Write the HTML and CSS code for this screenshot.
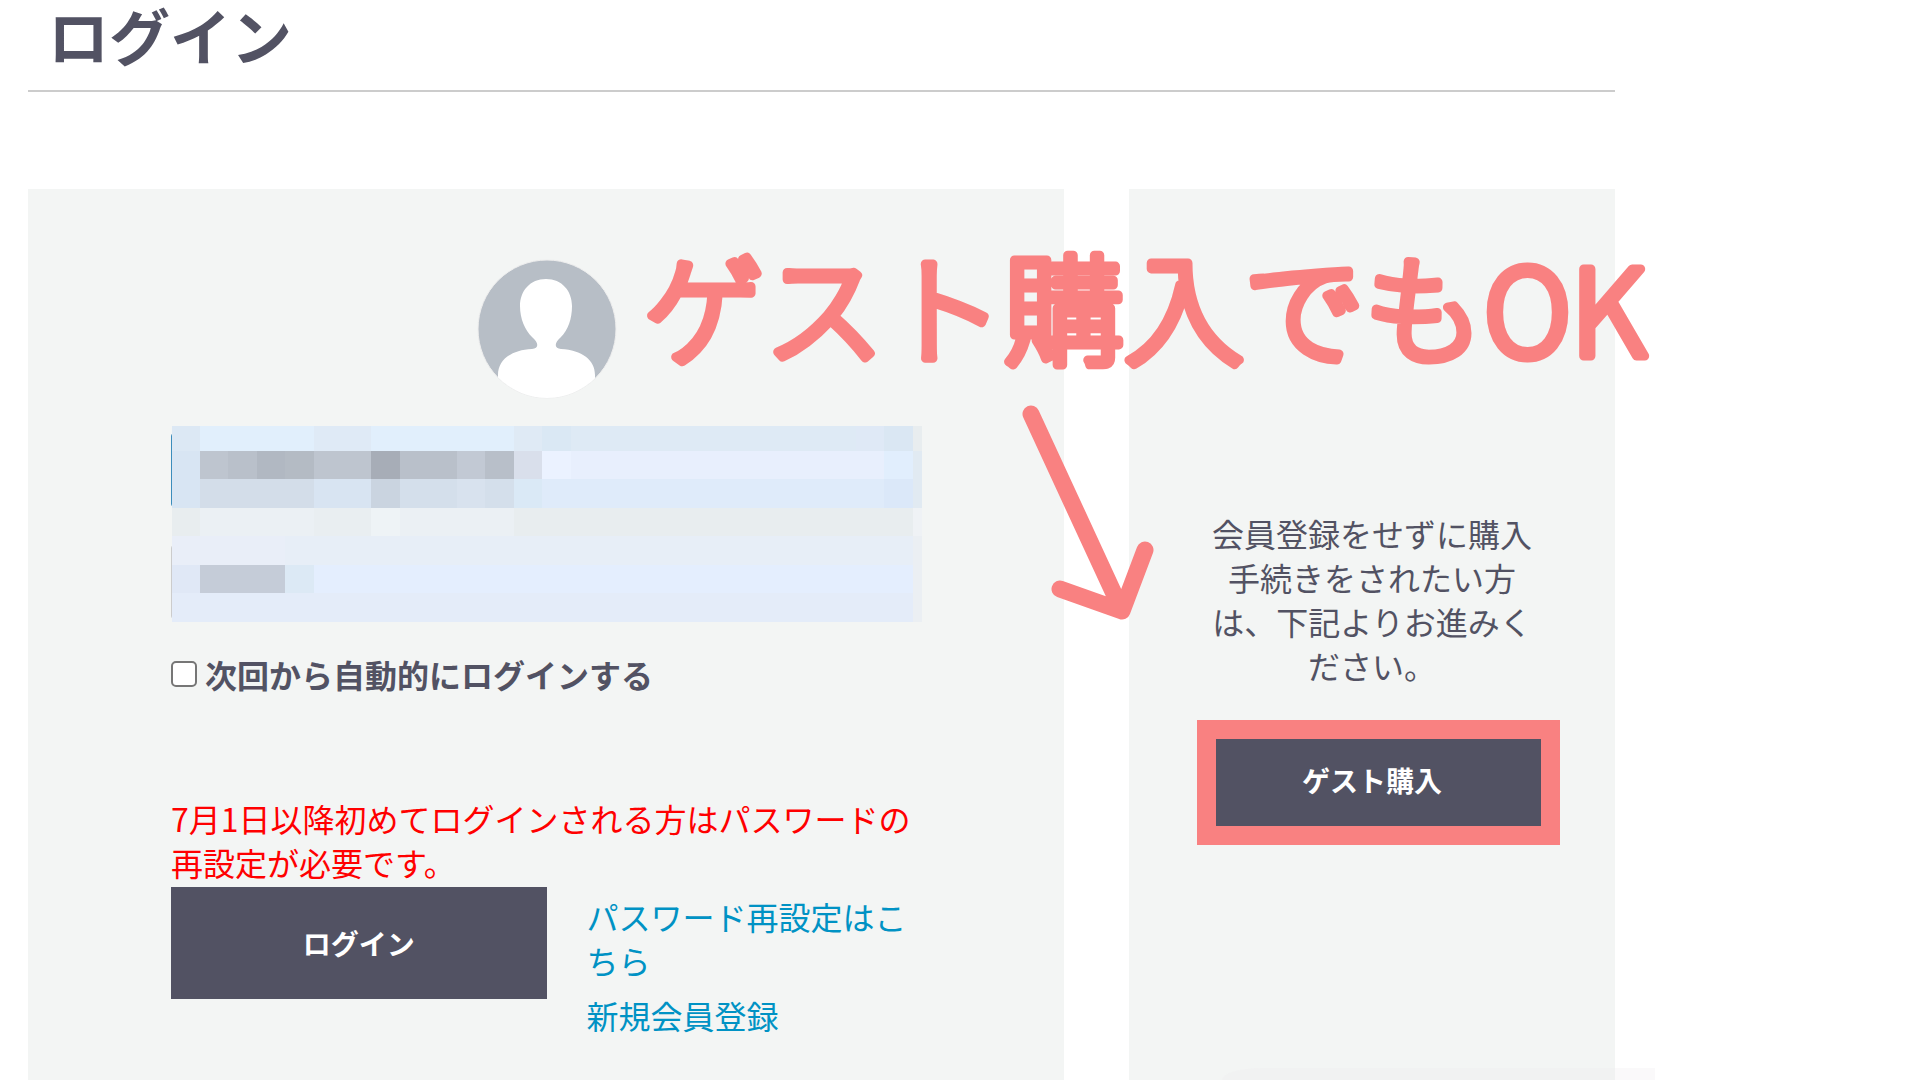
FILE: index.html
```html
<!DOCTYPE html>
<html lang="ja">
<head>
    <meta charset="UTF-8">
    <title>ログイン</title>
    <link rel="stylesheet" href="styles.css">
</head>
<body>
    <main class="page">
        <h1 class="title">ログイン</h1>

        <div class="panels">
            <form class="panel login">
                <svg class="avatar" viewBox="0 0 140 140" aria-hidden="true">
                    <defs>
                        <clipPath id="avatarClip"><circle cx="70" cy="70" r="69"/></clipPath>
                    </defs>
                    <circle cx="70" cy="70" r="69" fill="#b7bec6" stroke="#eeeeee"/>
                    <path clip-path="url(#avatarClip)" fill="#fff" d="M69 20C53 20 43 32 43 47C43 60 48 71 55 78C62 84 62 89 55 90C34 91 21 101 21 116V140H118V116C118 101 105 91 84 90C77 89 77 84 84 78C91 71 95 60 95 47C95 32 85 20 69 20Z"/>
                </svg>

                <div class="fields">
                    <input type="email" class="field field-active" aria-label="メールアドレス">
                    <input type="password" class="field" aria-label="パスワード">
                    <svg class="mosaic" viewBox="0 0 750 196" preserveAspectRatio="none" shape-rendering="crispEdges" aria-hidden="true">
                        <!-- row 1 -->
                        <rect width="741" height="25" fill="#deeaf5"/>
                        <rect width="28" height="25" fill="#dce8f4"/>
                        <rect x="28" width="314" height="25" fill="#e1effc"/>
                        <rect x="142" width="57" height="25" fill="#dfeaf6"/>
                        <rect x="342" width="28" height="25" fill="#dfeaf5"/>
                        <rect x="370" width="29" height="25" fill="#dae8f4"/>
                        <rect x="684" width="28" height="25" fill="#dfe9f6"/>
                        <rect x="712" width="29" height="25" fill="#dae7f3"/>
                        <rect x="741" width="9" height="25" fill="#e8edef"/>
                        <!-- row 2 -->
                        <rect y="25" width="28" height="57" fill="#d8e5f3"/>
                        <rect x="28" y="25" width="171" height="28" fill="#bec5cf"/>
                        <rect x="56" y="25" width="29" height="28" fill="#b9c0ca"/>
                        <rect x="85" y="25" width="28" height="28" fill="#b1b8c2"/>
                        <rect x="113" y="25" width="29" height="28" fill="#b4bbc4"/>
                        <rect x="199" y="25" width="29" height="28" fill="#a7adb7"/>
                        <rect x="228" y="25" width="57" height="28" fill="#b9c0ca"/>
                        <rect x="285" y="25" width="28" height="28" fill="#c2c9d4"/>
                        <rect x="313" y="25" width="29" height="28" fill="#b8bfc9"/>
                        <rect x="342" y="25" width="28" height="28" fill="#d9dfeb"/>
                        <rect x="370" y="25" width="29" height="28" fill="#ebf2ff"/>
                        <rect x="399" y="25" width="313" height="28" fill="#e8effd"/>
                        <rect x="712" y="25" width="29" height="28" fill="#e1eefd"/>
                        <rect x="741" y="25" width="9" height="57" fill="#e1eaf2"/>
                        <!-- row 3 -->
                        <rect x="28" y="53" width="171" height="29" fill="#d3dde9"/>
                        <rect x="142" y="53" width="57" height="29" fill="#d8e4f2"/>
                        <rect x="199" y="53" width="29" height="29" fill="#cad4e0"/>
                        <rect x="228" y="53" width="114" height="29" fill="#d4dfeb"/>
                        <rect x="285" y="53" width="28" height="29" fill="#d8e2ee"/>
                        <rect x="342" y="53" width="28" height="29" fill="#dae9f6"/>
                        <rect x="370" y="53" width="342" height="29" fill="#dfebfa"/>
                        <rect x="712" y="53" width="29" height="29" fill="#dbe8f9"/>
                        <!-- row 4 -->
                        <rect y="82" width="741" height="28" fill="#e8edef"/>
                        <rect x="28" y="82" width="314" height="28" fill="#ebf0f4"/>
                        <rect x="142" y="82" width="57" height="28" fill="#e9eef1"/>
                        <rect x="199" y="82" width="29" height="28" fill="#eef3f6"/>
                        <rect x="741" y="82" width="9" height="28" fill="#eff2f5"/>
                        <!-- row 5 -->
                        <rect y="110" width="741" height="29" fill="#e7eef7"/>
                        <rect y="110" width="113" height="29" fill="#e9eef8"/>
                        <rect x="741" y="110" width="9" height="86" fill="#ebeff3"/>
                        <!-- row 6 -->
                        <rect y="139" width="28" height="28" fill="#e0e8f6"/>
                        <rect x="28" y="139" width="85" height="28" fill="#c5ccd8"/>
                        <rect x="113" y="139" width="29" height="28" fill="#dce9f5"/>
                        <rect x="142" y="139" width="599" height="28" fill="#e4eefe"/>
                        <!-- row 7 -->
                        <rect y="167" width="741" height="29" fill="#e4ecf9"/>
                    </svg>
                </div>

                <label class="remember">
                    <input type="checkbox" class="checkbox">
                    次回から自動的にログインする
                </label>

                <p class="notice">7月1日以降初めてログインされる方はパスワードの再設定が必要です。</p>

                <div class="actions">
                    <button type="submit" class="button login-button">ログイン</button>
                    <div class="links">
                        <a href="#">パスワード再設定はこちら</a>
                        <a href="#">新規会員登録</a>
                    </div>
                </div>
            </form>

            <section class="panel guest">
                <p class="guest-text">会員登録をせずに購入手続きをされたい方は、下記よりお進みください。</p>
                <div class="highlight">
                    <button type="button" class="button guest-button">ゲスト購入</button>
                </div>
            </section>

            <svg class="callout" width="1640" height="460">
                <text class="callout-text" x="616" y="167">ゲスト購入でもOK</text>
                <path class="callout-arrow" d="M1003 225L1094 422M1032 400L1094 422L1117 361"/>
            </svg>
        </div>
    </main>
    <div class="bottom-shade"></div>
</body>
</html>
```
FILE: styles.css
```css
* {
    box-sizing: border-box;
}

body {
    margin: 0;
    background: #fff;
    color: #525263;
    font-family: "Noto Sans CJK JP", sans-serif;
    font-size: 32px;
    line-height: 44px;
}

p {
    margin: 0;
}

.page {
    display: flex;
    flex-direction: column;
    min-height: 100vh;
    padding: 0 305px 0 28px;
}

.title {
    margin: 0 0 97px;
    padding: 0 0 20px 20px;
    border-bottom: 2px solid #ccc;
    font-size: 61px;
    line-height: 70px;
}

.panels {
    position: relative;
    flex: 1;
    display: grid;
    grid-template-columns: 1036fr 486fr;
    gap: 65px;
}

.panel {
    background: #f3f5f4;
}

.login {
    padding: 70px 142px 40px 143px;
}

.avatar {
    display: block;
    width: 140px;
    height: 140px;
    margin: 0 auto 27px;
}

.fields {
    position: relative;
    display: flex;
    flex-direction: column;
    gap: 38px;
    padding: 7px 0 3px;
}

.field {
    width: 100%;
    height: 74px;
    padding: 0 24px;
    border: 1px solid #ccc;
    border-radius: 3px;
    background: #e8f0fe;
    font: inherit;
}

.field-active {
    border-color: #3c8dbc;
}

/* censored area over the saved credentials */
.mosaic {
    position: absolute;
    top: 0;
    left: 1px;
    width: calc(100% - 1px);
    height: 100%;
}

.remember {
    display: flex;
    align-items: center;
    gap: 8px;
    margin-top: 30px;
    font-weight: bold;
}

.checkbox {
    appearance: none;
    width: 26px;
    height: 26px;
    margin: 0;
    border: 2px solid #767676;
    border-radius: 5px;
    background: #fff;
}

.checkbox:checked {
    background: #525263;
}

.notice {
    margin-top: 100px;
    color: #f00;
}

.actions {
    display: grid;
    grid-template-columns: 1fr 1fr;
    align-items: start;
    margin-top: 3px;
}

.button {
    display: block;
    width: 100%;
    padding: 0;
    border: none;
    background: #525263;
    color: #fff;
    font-family: inherit;
    font-size: 28px;
    font-weight: bold;
    cursor: pointer;
}

.login-button {
    height: 112px;
}

.links {
    display: flex;
    flex-direction: column;
    gap: 11px;
    padding: 7px 0 0 40px;
}

.links a {
    color: #0092c4;
    text-decoration: none;
}

.links a:hover {
    text-decoration: underline;
}

.guest {
    padding: 322px 74px 40px;
}

.guest-text {
    text-align: center;
}

.highlight {
    position: relative;
    margin-top: 47px;
}

.highlight::after {
    content: "";
    position: absolute;
    top: -14px;
    right: -19px;
    bottom: -19px;
    left: -6px;
    border: 19px solid #f98181;
    pointer-events: none;
}

.guest-button {
    height: 92px;
}

.callout {
    position: absolute;
    top: 0;
    left: 0;
    pointer-events: none;
}

.callout-text {
    fill: #f98181;
    stroke: #f98181;
    stroke-width: 9px;
    stroke-linejoin: round;
    font-size: 120px;
    font-weight: 300;
}

.callout-arrow {
    fill: none;
    stroke: #f98181;
    stroke-width: 17px;
    stroke-linecap: round;
    stroke-linejoin: round;
}

.bottom-shade {
    position: fixed;
    right: 265px;
    bottom: 0;
    width: 433px;
    height: 12px;
    border-top-left-radius: 40px 12px;
    background: rgba(240, 236, 238, 0.3);
}
```
